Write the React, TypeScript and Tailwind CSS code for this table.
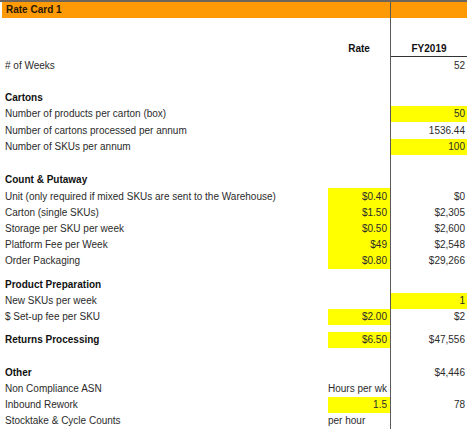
import React from 'react';

type Row = {
  h: number;
  label?: string;
  bold?: boolean;
  rate?: string;
  rateHl?: boolean;
  rateLeft?: boolean;
  fy?: string;
  fyHl?: boolean;
  header?: boolean;
};

const rows: Row[] = [
  { h: 23 },
  { h: 16, rate: 'Rate', fy: 'FY2019', header: true },
  { h: 17, label: '# of Weeks', fy: '52' },
  { h: 16 },
  { h: 16, label: 'Cartons', bold: true },
  { h: 16, label: 'Number of products per carton (box)', fy: '50', fyHl: true },
  { h: 17, label: 'Number of cartons processed per annum', fy: '1536.44' },
  { h: 16, label: 'Number of SKUs per annum', fy: '100', fyHl: true },
  { h: 17 },
  { h: 16, label: 'Count & Putaway', bold: true },
  { h: 17, label: 'Unit (only required if mixed SKUs are sent to the Warehouse)', rate: '$0.40', rateHl: true, fy: '$0' },
  { h: 16, label: 'Carton (single SKUs)', rate: '$1.50', rateHl: true, fy: '$2,305' },
  { h: 16, label: 'Storage per SKU per week', rate: '$0.50', rateHl: true, fy: '$2,600' },
  { h: 16, label: 'Platform Fee per Week', rate: '$49', rateHl: true, fy: '$2,548' },
  { h: 16, label: 'Order Packaging', rate: '$0.80', rateHl: true, fy: '$29,266' },
  { h: 8 },
  { h: 16, label: 'Product Preparation', bold: true },
  { h: 16, label: 'New SKUs per week', fy: '1', fyHl: true },
  { h: 16, label: '$ Set-up fee per SKU', rate: '$2.00', rateHl: true, fy: '$2' },
  { h: 7 },
  { h: 16, label: 'Returns Processing', bold: true, rate: '$6.50', rateHl: true, fy: '$47,556' },
  { h: 17 },
  { h: 16, label: 'Other', bold: true, fy: '$4,446' },
  { h: 16, label: 'Non Compliance ASN', rate: 'Hours per wk', rateLeft: true },
  { h: 16, label: 'Inbound Rework', rate: '1.5', rateHl: true, fy: '78' },
  { h: 16, label: 'Stocktake & Cycle Counts', rate: 'per hour', rateLeft: true },
];

function rateAlign(r: Row) {
  if (r.header) return 'justify-center font-bold text-[#111]';
  if (r.rateLeft) return 'justify-start';
  return 'justify-end pr-[3px]';
}

export default function App() {
  return (
    <div className="w-[474px] h-[429px] overflow-hidden bg-white text-[10px] leading-none text-[#2b2b2b] font-['Liberation_Sans',Arial,sans-serif]">
      <div className="flex h-[2px]">
        <div className="w-[467px] bg-[#6f6459]" />
      </div>
      <div className="flex h-[16px]">
        <div className="w-[2px]" />
        <div className="flex w-[388px] items-center bg-[#fe9a06] pl-[4px] font-bold text-[#2a1800]">Rate Card 1</div>
        <div className="w-[1px] bg-[#5a5a5a]" />
        <div className="w-[76px] bg-[#fe9a06]" />
      </div>
      {rows.map((r, i) => (
        <div key={i} className="flex" style={{ height: r.h }}>
          <div className={`flex w-[328px] items-center pl-[5px] whitespace-nowrap ${r.bold ? 'font-bold text-[#111]' : ''}`}>
            {r.label}
          </div>
          <div
            className={`flex w-[62px] items-center overflow-hidden whitespace-nowrap ${rateAlign(r)} ${r.rateHl ? 'bg-[#ffff00]' : ''}`}
          >
            {r.rate}
          </div>
          <div className="w-[1px] bg-[#5a5a5a]" />
          <div
            className={`flex w-[76px] items-center ${r.header ? 'justify-center font-bold text-[#111] border-b border-[#333]' : 'justify-end pr-[2px]'} ${r.fyHl ? 'bg-[#ffff00]' : ''}`}
          >
            {r.fy}
          </div>
        </div>
      ))}
    </div>
  );
}
